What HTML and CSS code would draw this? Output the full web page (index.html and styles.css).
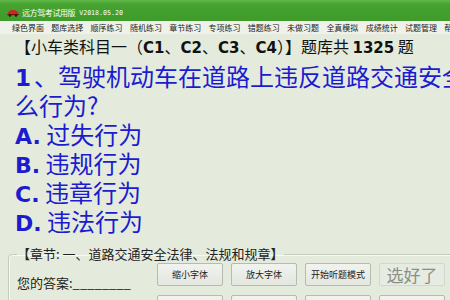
FILE: index.html
```html
<!DOCTYPE html>
<html lang="zh-CN">
<head>
<meta charset="utf-8">
<title>远方驾考试用版</title>
<link rel="stylesheet" href="styles.css">
</head>
<body>
<div class="window">
  <header class="titlebar">
    <svg class="appicon" width="12" height="8" viewBox="0 0 12 8">
      <path d="M1 3.5 L3.5 1.2 L8 1 L10.5 3 L11.5 3.3 L11.5 6 L0.5 6 Z" fill="#c9281c"/>
      <rect x="0.5" y="5" width="11" height="1.2" fill="#7a1610"/>
      <circle cx="3" cy="6.4" r="1.3" fill="#2b1a12"/>
      <circle cx="9" cy="6.4" r="1.3" fill="#2b1a12"/>
    </svg>
    <span class="title">远方驾考试用版</span>
    <span class="version">V2018.05.20</span>
  </header>
  <nav class="menubar">
    <span>绿色界面</span><span>题库选择</span><span>顺序练习</span><span>随机练习</span><span>章节练习</span><span>专项练习</span><span>错题练习</span><span>未做习题</span><span>全真模拟</span><span>成绩统计</span><span>试题管理</span><span>帮助</span>
  </nav>
  <main class="content">
    <div class="bank">【小车类科目一（<b>C1</b>、<b>C2</b>、<b>C3</b>、<b>C4</b>）】题库共 <b>1325</b> 题</div>
    <div class="question"><b>1</b>、驾驶机动车在道路上违反道路交通安全法律、法规的行为属于什<br>么行为?</div>
    <ul class="options">
      <li><b>A.</b> 过失行为</li>
      <li><b>B.</b> 违规行为</li>
      <li><b>C.</b> 违章行为</li>
      <li><b>D.</b> 违法行为</li>
    </ul>
    <fieldset class="chapter">
      <legend>【章节: 一、道路交通安全法律、法规和规章】</legend>
      <div class="answer-row">
        <div class="answer">您的答案:________</div>
        <div class="buttons">
          <button class="btn">缩小字体</button>
          <button class="btn">放大字体</button>
          <button class="btn">开始听题模式</button>
          <button class="btn disabled">选好了</button>
          <button class="btn">上一题</button>
          <button class="btn">下一题</button>
          <button class="btn">查看答案</button>
          <button class="btn">题目详解</button>
        </div>
      </div>
    </fieldset>
  </main>
</div>
</body>
</html>
```

FILE: styles.css
```css
html, body {
  margin: 0;
  padding: 0;
  width: 450px;
  height: 300px;
  overflow: hidden;
  background: #e4ebdc;
}

.window {
  width: 640px;
  font-family: "Noto Sans CJK SC", "DejaVu Sans", sans-serif;
  color: #111;
}

.titlebar {
  height: 21px;
  display: flex;
  align-items: center;
  padding-left: 7px;
  background: linear-gradient(#62b94a 0, #46a331 4px, #3f9b2a 100%);
  color: #fff;
  box-sizing: border-box;
  padding-top: 4px;
}

.appicon {
  margin-right: 3px;
  display: block;
}

.title {
  font-size: 8px;
  line-height: 10px;
  letter-spacing: -0.4px;
}

.version {
  font-family: "DejaVu Sans Mono", monospace;
  font-size: 6.6px;
  margin-left: 4px;
  line-height: 10px;
}

.menubar {
  height: 13px;
  background: #eef2ea;
  display: flex;
  align-items: center;
  padding-left: 12px;
  gap: 7.3px;
  font-size: 8px;
  line-height: 10px;
  color: #222;
  white-space: nowrap;
}

.content {
  padding: 2px 0 0 15px;
}

.bank {
  font-size: 16px;
  line-height: 20px;
  height: 20px;
  white-space: nowrap;
}

.bank b {
  font-family: "DejaVu Sans", sans-serif;
  font-weight: bold;
  font-size: 15px;
  line-height: 1;
}

.question {
  margin-top: 5px;
  font-size: 24px;
  line-height: 29px;
  color: #1b1bd0;
  white-space: nowrap;
}

.question b {
  font-family: "DejaVu Sans", sans-serif;
  font-weight: bold;
  font-size: 23px;
  line-height: 1;
  margin-right: 3px;
}

.options {
  list-style: none;
  margin: 0;
  padding: 0;
  font-size: 24px;
  line-height: 29px;
  color: #1b1bd0;
}

.options li {
  height: 29px;
}

.options b {
  font-family: "DejaVu Sans", sans-serif;
  font-weight: bold;
  font-size: 22px;
  line-height: 1;
}

.chapter {
  margin: 11px 0 0 -7px;
  padding: 0 0 0 8px;
  border: 1px solid #c4ccbc;
  border-radius: 4px;
  box-shadow: inset 1px 1px 0 #f7f9f4;
  min-inline-size: 0;
}

.chapter legend {
  padding: 0;
  font-size: 13px;
  line-height: 16px;
  color: #222;
}

.answer-row {
  display: flex;
  align-items: flex-start;
}

.answer {
  width: 140px;
  margin-top: 13px;
  font-size: 13px;
  line-height: 16px;
  color: #222;
}

.buttons {
  display: grid;
  grid-template-columns: repeat(4, 66px);
  grid-auto-rows: 23px;
  column-gap: 8px;
  row-gap: 9px;
  margin-top: 1px;
}

.btn {
  font-family: "Noto Sans CJK SC", sans-serif;
  font-size: 9px;
  color: #222;
  background: linear-gradient(#f1f3ef, #e3e7df);
  border: 1px solid #b5bcae;
  border-radius: 2px;
  padding: 0;
  line-height: 12px;
}

.btn.disabled {
  font-size: 17px;
  color: #8a8f86;
  background: #e7ece2;
  border-color: #d2d8cc;
}
```
